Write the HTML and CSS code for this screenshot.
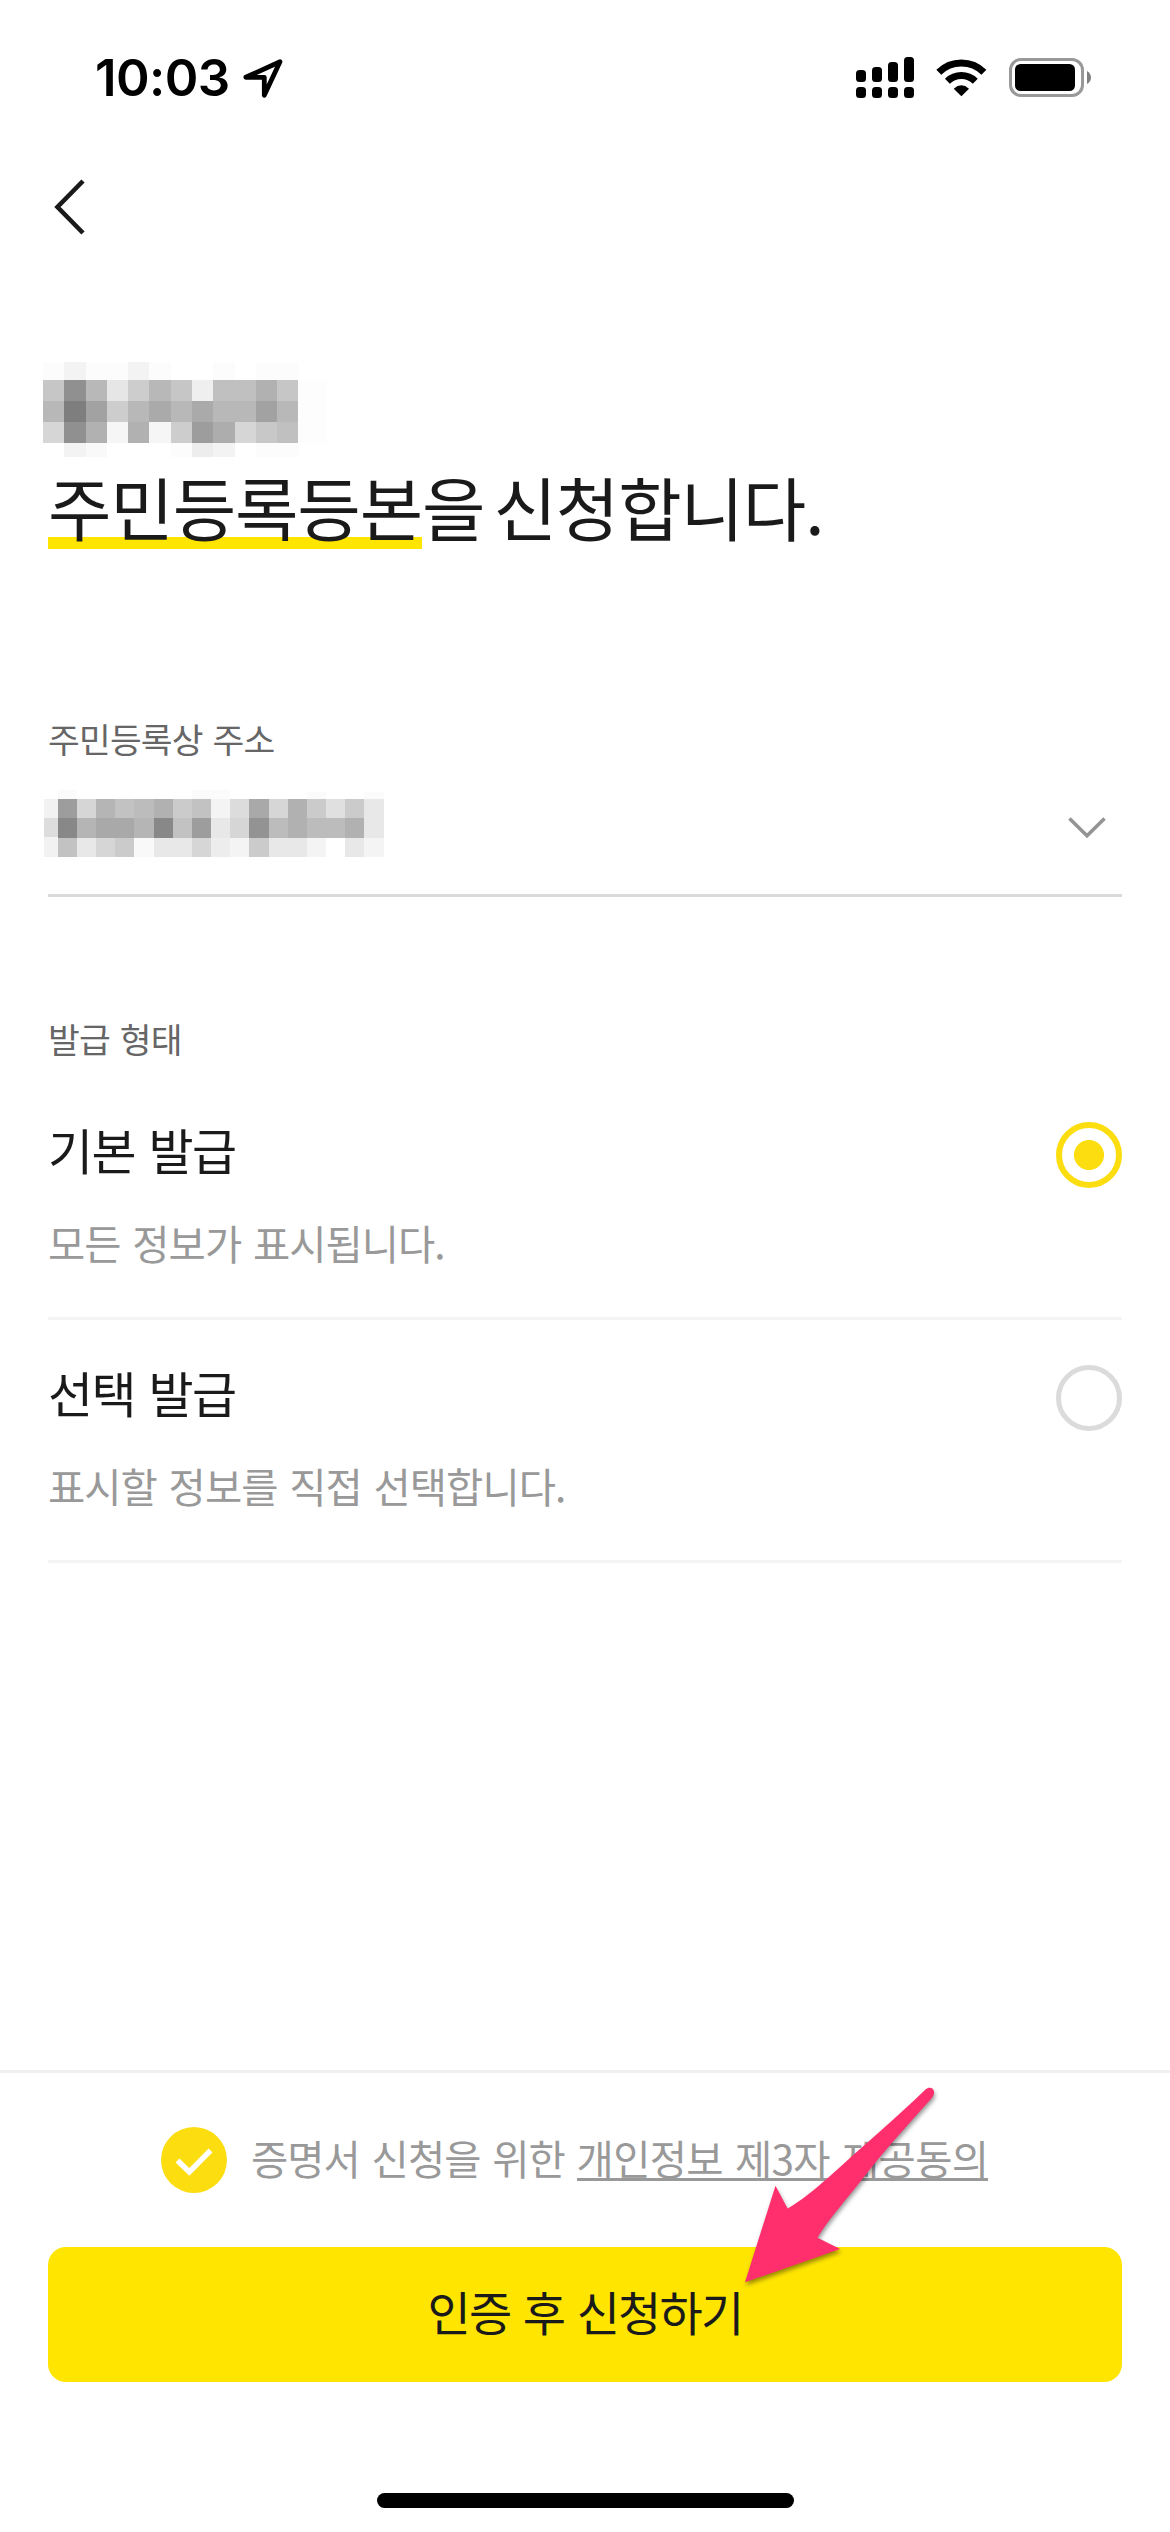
FILE: index.html
```html
<!DOCTYPE html>
<html lang="ko">
<head>
<meta charset="utf-8">
<title>주민등록등본 신청</title>
<link rel="stylesheet" href="styles.css">
</head>
<body>
<div class="screen">
  <div class="status">
    <div class="status-left">
      <span class="time">10:03</span>
      <svg class="location" width="43" height="43" viewBox="0 0 43 43"><path d="M4.8 20.3 L39 4.8 L23.3 38.3 V20.3 Z" fill="none" stroke="#000" stroke-width="4.8" stroke-linejoin="round"/></svg>
    </div>
    <div class="status-right">
      <svg width="58" height="41" viewBox="0 0 58 41">
        <rect x="0" y="13" width="10" height="12" rx="3.5"/><rect x="16" y="10" width="10" height="15" rx="3.5"/><rect x="32" y="5" width="10" height="20" rx="3.5"/><rect x="48" y="0" width="10" height="25" rx="3.5"/>
        <rect x="0" y="30" width="10" height="11" rx="3.5"/><rect x="16" y="30" width="10" height="11" rx="3.5"/><rect x="32" y="30" width="10" height="11" rx="3.5"/><rect x="48" y="30" width="10" height="11" rx="3.5"/>
      </svg>
      <svg class="wifi" width="51" height="38" viewBox="0 0 51 38">
        <path d="M2.8 13.3 A32 32 0 0 1 47.9 13.3" fill="none" stroke="#000" stroke-width="7"/>
        <path d="M11.4 22.2 A20 20 0 0 1 39.3 22.2" fill="none" stroke="#000" stroke-width="7"/>
        <path d="M17.7 29.7 Q25.4 22.8 33 29.7 L25.4 37.2 Z"/>
      </svg>
      <svg class="battery" width="83" height="40" viewBox="0 0 83 40">
        <rect x="1.5" y="1.5" width="72" height="36" rx="10.5" fill="none" stroke="#999" stroke-width="3"/>
        <rect x="6" y="6" width="60" height="27" rx="5.5"/>
        <path d="M78 13 Q82 15.5 82 19.5 T78 26 Z" fill="#808080"/>
      </svg>
    </div>
  </div>

  <div class="nav">
    <svg width="32" height="56" viewBox="0 0 32 56"><path d="M30 2 L4.5 28 L30 54" fill="none" stroke="#1a1a1a" stroke-width="4.6"/></svg>
  </div>

  <main class="content">
    <svg class="mask-name" width="284" height="95" viewBox="0 0 284 95" shape-rendering="crispEdges">
      <g transform="scale(21.28 1)">
        <path fill="#fcfcfc" d="M0 0h1v18H0zM2 0h2v18H2zM5 0h1v18H5zM8 0h1v18H8zM10 0h2v18H10zM6 81h1v14H6zM10 81h2v14H10z"/>
        <path fill="#f3f3f3" d="M1 0h1v18H1zM4 0h1v18H4zM1 81h1v14H1zM8 81h1v14H8z"/>
        <path fill="#f9f9f9" d="M2 81h1v14H2z"/><path fill="#ededed" d="M7 81h1v14H7z"/><path fill="#fdfdfd" d="M12 18h1.35v63H12z"/>
        <g transform="translate(0 18) scale(1 21)">
          <path fill="#c6c6c6" d="M0 0h1v1H0zM6 0h1v1H6zM11 0h1v1h-1z"/><path fill="#909090" d="M1 0h1v1H1zM1 2h1v1H1z"/><path fill="#b8b8b8" d="M2 0h1v1H2zM5 0h1v1H5zM0 1h1v1H0zM4 1h1v1H4zM6 1h1v1H6zM8 1h2v1H8zM11 1h1v1h-1z"/><path fill="#e6e6e6" d="M3 0h1v1H3z"/><path fill="#cdcdcd" d="M4 0h1v1H4zM3 1h1v1H3zM6 2h1v1H6z"/><path fill="#efefef" d="M7 0h1v1H7z"/><path fill="#c0c0c0" d="M8 0h2v1H8zM11 2h1v1h-1z"/><path fill="#b1b1b1" d="M10 0h1v1h-1zM2 2h1v1H2zM4 2h1v1H4z"/><path fill="#7e7e7e" d="M1 1h1v1H1z"/><path fill="#a2a2a2" d="M2 1h1v1H2zM10 1h1v1h-1z"/><path fill="#aaa" d="M5 1h1v1H5zM7 1h1v1H7z"/><path fill="#d6d6d6" d="M0 2h1v1H0zM9 2h1v1H9z"/><path fill="#f6f6f6" d="M3 2h1v1H3zM5 2h1v1H5z"/><path fill="#9d9d9d" d="M7 2h1v1H7z"/><path fill="#adadad" d="M8 2h1v1H8z"/><path fill="#c8c8c8" d="M10 2h1v1h-1z"/>
        </g>
      </g>
    </svg>
    <h1 class="title"><span class="mark">주민등록등본</span>을 신청합니다.</h1>

    <section class="address">
      <h2 class="label">주민등록상 주소</h2>
      <div class="select">
        <svg width="341" height="67" viewBox="0 0 341 67" shape-rendering="crispEdges">
          <path fill="#f2f2f2" d="M0 9h14v19H0zM0 47h14v20H0z"/><path fill="#ddd" d="M0 28h14v19H0z"/>
          <g transform="translate(13.7 9.3) scale(19.17 19.13)">
            <path fill="#fbfbfb" d="M0-.48h1V0H0zM7-.48h2V0H7zM13-.4h1V0h-1zM16-.4h1V0h-1z"/>
            <path fill="#9d9d9d" d="M0 0h1v1H0zM7 1h1v1H7z"/><path fill="#d6d6d6" d="M1 0h1v1H1zM11 0h1v1h-1zM9 1h1v1H9zM2 2h1v1H2zM7 2h1v1H7z"/><path fill="#b5b5b5" d="M2 0h1v1H2zM1 1h1v1H1zM4 1h1v1H4zM14 1h1v1h-1z"/><path fill="#c2c2c2" d="M3 0h1v1H3zM7 0h1v1H7zM6 1h1v1H6zM0 2h1v1H0z"/><path fill="#bcbcbc" d="M4 0h1v1H4zM11 1h1v1h-1zM13 1h2v1h-2z"/><path fill="#b1b1b1" d="M5 0h1v1H5zM12 0h1v1h-1zM12 1h1v1h-1zM15 1h1v1h-1z"/><path fill="#cbcbcb" d="M6 0h1v1H6zM13 0h1v1h-1zM15 0h1v1h-1zM3 2h1v1H3zM10 2h1v1h-1z"/><path fill="#f4f4f4" d="M8 0h1v1H8zM9 2h1v1H9zM13 2h1v1h-1zM16 2h1v1h-1z"/><path fill="#dcdcdc" d="M9 0h1v1H9z"/><path fill="#a9a9a9" d="M10 0h1v1h-1zM2 1h1v1H2zM3 1h1v1H3z"/><path fill="#e0e0e0" d="M14 0h1v1h-1z"/><path fill="#e8e8e8" d="M16 0h1v1h-1zM8 1h1v1H8zM16 1h1v1h-1zM1 2h1v1H1zM5 2h2v1H5zM11 2h2v1h-2zM15 2h1v1h-1z"/><path fill="#888" d="M0 1h1v1H0zM5 1h1v1H5z"/><path fill="#939393" d="M10 1h1v1h-1z"/><path fill="#f9f9f9" d="M4 2h1v1H4z"/><path fill="#ededed" d="M8 2h1v1H8z"/>
          </g>
        </svg>
        <svg class="chevron" width="40" height="24" viewBox="0 0 40 24"><path d="M2.5 2.5 L20 19.7 L37.5 2.5" fill="none" stroke="#949494" stroke-width="3.6"/></svg>
      </div>
    </section>

    <section class="issue">
      <h2 class="label">발급 형태</h2>
      <div class="option">
        <div><p class="name">기본 발급</p><p class="desc">모든 정보가 표시됩니다.</p></div>
        <span class="radio on"></span>
      </div>
      <div class="option">
        <div><p class="name">선택 발급</p><p class="desc">표시할 정보를 직접 선택합니다.</p></div>
        <span class="radio"></span>
      </div>
    </section>
  </main>

  <footer class="footer">
    <div class="consent">
      <svg width="66" height="66" viewBox="0 0 66 66"><circle cx="33" cy="33" r="33" fill="#fbdd10"/><path d="M16.5 33.5 L28.3 45 L49.5 23.5" fill="none" stroke="#fff" stroke-width="5.4"/></svg>
      <p class="consent-text">증명서 신청을 위한 <a class="link">개인정보 제3자 제공동의</a></p>
    </div>
    <button class="submit">인증 후 신청하기</button>
    <div class="home"></div>
    <svg class="pointer" width="220" height="220" viewBox="735 2075 220 220"><path d="M745 2282.3 L775.5 2185.7 L787.6 2208.5 C801 2201 815 2189 828.4 2177.5 C863 2146 895 2119 925.5 2089.5 C930 2085.500 935.500 2089 933.800 2094.500 Q933.200 2096.500 931 2099 C906 2127 884 2151 863.400 2177.700 C846 2200 828 2220 817.500 2237.700 L840.200 2249 Z" fill="#ff2f6e"/></svg>
  </footer>
</div>
</body>
</html>
```
FILE: styles.css
```css
* { box-sizing: border-box; margin: 0; padding: 0; }

body {
  background: #fff;
  color: #1a1a1a;
  font-family: "Noto Sans CJK KR", sans-serif;
}

.screen {
  display: flex;
  flex-direction: column;
  width: 1170px;
  height: 2532px;
  overflow: hidden;
}

.status {
  display: flex;
  justify-content: space-between;
  height: 132px;
  padding: 57px 78px 0 95px;
}

.status-left, .status-right { display: flex; align-items: flex-start; }

.time {
  width: 146px;
  font: 600 51px/42px Inter, sans-serif;
  letter-spacing: -0.6px;
  color: #000;
}

.wifi { margin: 2px 0 0 22px; }
.battery { margin: 1px 0 0 22px; }

.nav { height: 230px; padding: 47px 0 0 53px; }

.content { display: flex; flex-direction: column; padding: 0 48px; }

.mask-name { display: block; margin-left: -5px; }

.title {
  margin-top: 4px;
  font-size: 69px;
  font-weight: 400;
  line-height: 90px;
  letter-spacing: -1.15px;
  word-spacing: -9px;
  white-space: nowrap;
}

.mark {
  display: inline-block;
  background: linear-gradient(#ffe500, #ffe500) no-repeat 0 76px / 100% 12px;
}

.address { margin-top: 162px; }

.label {
  color: #666;
  font-size: 34.5px;
  font-weight: 400;
  line-height: 50px;
  letter-spacing: -0.8px;
  word-spacing: 1px;
}

.select {
  display: flex;
  justify-content: space-between;
  height: 134px;
  padding: 27px 15px 0 0;
  border-bottom: 3px solid #dadada;
}

.select svg:first-child { margin-left: -4px; }
.chevron { margin-top: 26px; }

.issue { margin-top: 116px; }
.issue .label { margin-bottom: 14px; }

.option {
  display: flex;
  justify-content: space-between;
  height: 243px;
  padding-top: 37px;
  border-bottom: 3px solid #f4f4f4;
}

.name {
  font-size: 49px;
  line-height: 70px;
  letter-spacing: -1.5px;
  word-spacing: 1px;
}

.desc, .consent-text {
  color: #999;
  font-size: 40.5px;
  line-height: 60px;
  letter-spacing: -1px;
  word-spacing: 1.5px;
  white-space: nowrap;
}

.desc { margin-top: 29px; }

.radio {
  width: 66px;
  height: 66px;
  margin-top: 8px;
  border: 5px solid #dbdbdb;
  border-radius: 50%;
}

.radio.on {
  border: 6px solid #fbdd10;
  background: radial-gradient(circle, #fbdd10 14.6px, transparent 15.4px);
}

.footer {
  position: relative;
  display: flex;
  flex-direction: column;
  height: 462px;
  margin-top: auto;
  padding: 54px 48px 0;
  border-top: 3px solid #f0f0f0;
}

.consent { display: flex; gap: 24px; height: 66px; padding-left: 113px; }

.consent-text { padding-top: 1px; }

.link {
  display: inline-block;
  height: 53px;
  border-bottom: 3px solid #999;
  letter-spacing: -0.7px;
}

.submit {
  height: 135px;
  margin-top: 54px;
  padding-bottom: 8px;
  border: 0;
  border-radius: 18px;
  background: #ffe500;
  color: #1a1a1a;
  font: 400 47px/127px "Noto Sans CJK KR", sans-serif;
  letter-spacing: -1.8px;
  word-spacing: 1px;
}

.home {
  align-self: center;
  width: 417px;
  height: 15px;
  margin-top: 111px;
  border-radius: 8px;
  background: #000;
}

/* Callout arrow lying over the consent row and the button */
.pointer {
  position: absolute;
  left: 735px;
  top: 2px;
  filter: drop-shadow(1px 3px 2px rgba(0, 0, 0, 0.4));
}
```
